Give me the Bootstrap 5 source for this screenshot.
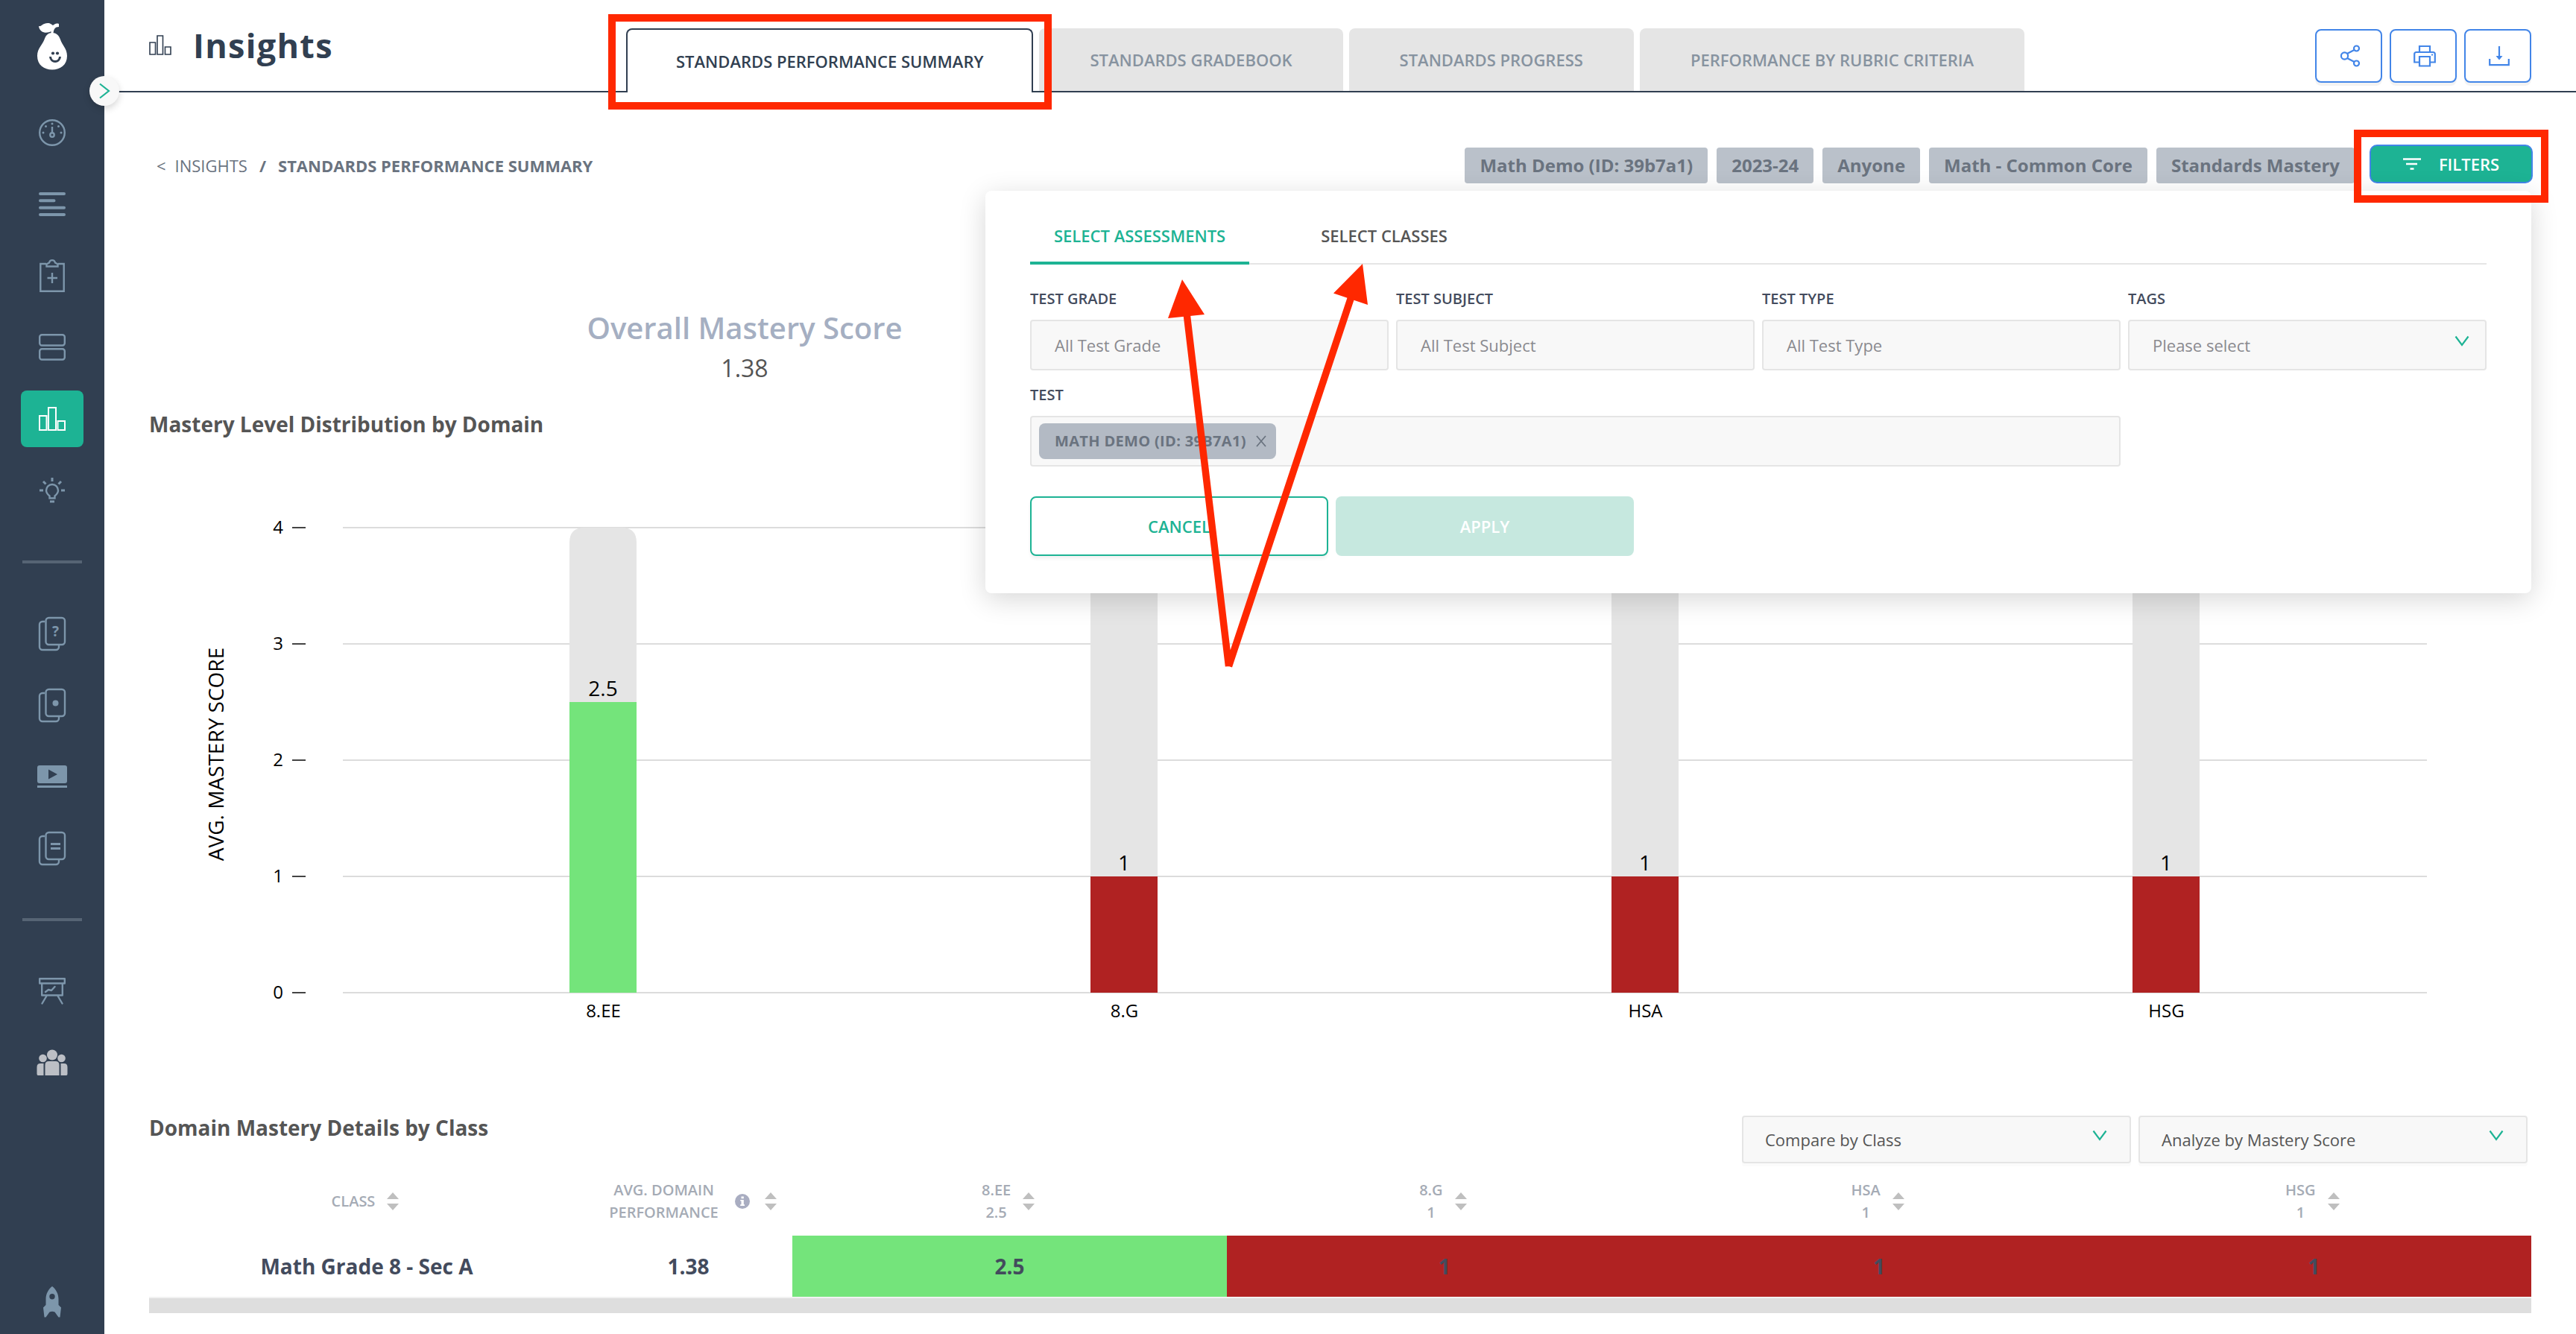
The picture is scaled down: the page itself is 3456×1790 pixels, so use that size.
<!DOCTYPE html>
<html lang="en">

<head>
  <meta charset="UTF-8">
  <meta name="viewport" content="width=device-width, initial-scale=1.0">
  <title>Insights - Standards Performance Summary</title>
  <link rel="stylesheet" href="https://cdn.jsdelivr.net/npm/bootstrap@5.3.0/dist/css/bootstrap.min.css">
  <style>
    :root {
      --navy: #313f51;
      --green: #1db394;
      --blue: #4285e8;
      --red: #ff2800;
      --icon: #7d96ab;
    }

    body {
      font-family: "Open Sans", "Noto Sans", sans-serif;
      font-size: 22px;
      color: #555;
      height: 1790px;
      overflow: hidden;
    }

    svg { display: block; }

    /* sidebar */
    .side-menu { width: 140px; height: 1790px; background: var(--navy); padding-top: 30px; }
    .side-menu svg { fill: none; stroke: var(--icon); stroke-width: 2.4; }
    .side-logo { height: 110px; }
    .side-item { width: 84px; height: 76px; border-radius: 8px; margin-bottom: 20px; }
    .side-item.active { background: var(--green); }
    .side-item.active svg { stroke: #fff; stroke-width: 2; }
    .side-line { width: 80px; height: 4px; background: #566474; margin: 36px 0 56px; }
    .side-toggle { left: 120px; top: 102px; width: 40px; height: 40px; background: #f8f8f8; box-shadow: 0 4px 10px rgba(0, 0, 0, .16); z-index: 5; }

    /* header */
    .top-bar { height: 124px; border-bottom: 2px solid var(--navy); padding: 0 60px; }
    .page-title { width: 640px; padding-top: 30px; }
    .page-title h1 { font-size: 45px; font-weight: 700; line-height: 62px; letter-spacing: 1.3px; color: var(--navy); margin: 0 0 0 29px; }
    .report-tabs { gap: 8px; padding-top: 38px; }
    .report-tab { height: 84px; padding: 0 68px; border-radius: 8px 8px 0 0; background: #e5e5e5; color: #8793a0; font-weight: 600; }
    .report-tab.active { height: 86px; margin-bottom: -2px; padding: 0 65px; border: 2px solid var(--navy); border-bottom: 0; background: #fff; color: var(--navy); }
    .action-btn { width: 90px; height: 72px; padding-left: 10px; border: 2px solid var(--blue); border-radius: 8px; background: #fff; box-shadow: 0 4px 0 #f3f3f3; }
    .action-btn svg { fill: none; stroke: var(--blue); stroke-width: 2.2; }

    /* content */
    .page-body { padding: 70px 60px 0; }
    .crumbs { height: 52px; padding: 4px 0 0 10px; color: #6a737f; font-weight: 500; }
    .filter-tag { height: 48px; padding: 0 20px; border-radius: 4px; background: #bac1ca; color: #6a737f; font-size: 24px; font-weight: 700; white-space: nowrap; }
    .filter-btn { width: 219px; height: 52px; margin-right: -2px; margin-left: 8px; border: 2px solid var(--blue); border-radius: 10px; background: var(--green); color: #fff; font-size: 22px; font-weight: 600; }
    .overall { margin-top: 164px; }
    .overall h2 { font-size: 40px; font-weight: 600; line-height: 60px; color: #a5afc2; margin: 0; }
    .overall div { font-size: 32px; line-height: 48px; }
    .section-title { font-size: 28px; font-weight: 700; line-height: 42px; color: #555; margin: 0; }
    .chart-title { padding-top: 30px; }
    .compare { margin-top: 57px; height: 69px; padding-right: 5px; }
    .compare .section-title { line-height: 33px; }
    .pick { width: 522px; height: 64px; padding: 0 30px 0 29px; background: #f8f8f8; border: 2px solid #e5e5e5; border-radius: 4px; box-shadow: 0 4px 0 #fbfbfb; }
    .chev { fill: none; stroke: var(--green); stroke-width: 2.2; margin-bottom: 11px; }

    /* details table */
    .details { width: 3196px; table-layout: fixed; border-collapse: collapse; text-align: center; }
    .details th { height: 92px; padding: 0 4px 0 0; font-size: 20px; line-height: 30px; font-weight: 600; color: #a5abb5; }
    .details td { height: 82px; padding: 0; font-size: 28px; font-weight: 700; color: #434b5d; }
    .info-dot { margin: 0 20px 0 22px; }
    .lvl-good { background: #74e47b; }
    .lvl-low { background: #b02222; }
    .scroll-track { height: 22px; background: #dedede; border-top: 2px solid #f2f2f2; }

    /* filter panel */
    .filter-panel { left: 1322px; top: 256px; width: 2074px; height: 540px; padding: 43px 60px 0; border-radius: 8px; background: #fff; box-shadow: 0 8px 36px rgba(0, 0, 0, .16); z-index: 3; }
    .panel-tabs { gap: 64px; border-bottom: 2px solid #e5e5e5; height: 56px; }
    .panel-tab { height: 56px; padding: 0 32px; line-height: 34px; font-weight: 600; }
    .panel-tab.active { color: var(--green); border-bottom: 4px solid var(--green); }
    .panel-row { gap: 10px; margin-top: 31px; }
    .test-row { width: 1463px; margin-top: 18px; }
    .field-name { font-size: 20px; line-height: 30px; font-weight: 600; color: #434b5d; margin-bottom: 13px; }
    .field-box { height: 68px; padding: 0 21px 0 31px; background: #f8f8f8; border: 2px solid #e5e5e5; border-radius: 4px; color: #8a8a8f; font-weight: 500; }
    .test-chip { height: 48px; padding: 0 13px 0 21px; margin-left: -21px; gap: 13px; border-radius: 8px; background: #b3bac4; color: #6a737f; font-size: 20px; font-weight: 700; letter-spacing: .33px; }
    .panel-actions { gap: 10px; margin-top: 40px; }
    .panel-btn { width: 400px; height: 80px; border-radius: 8px; font-size: 22px; font-weight: 600; }
    .btn-cancel { border: 2px solid var(--green); background: #fff; color: var(--green); box-shadow: 0 4px 4px #f3f3f3; }
    .btn-apply { border: 0; background: #c6e8df; color: #fff; }

    /* red callouts */
    .callout-box { border: 10px solid var(--red); z-index: 6; }
    .callout-tab { left: 816px; top: 19px; width: 595px; height: 128px; }
    .callout-filter { left: 3158px; top: 174px; width: 261px; height: 98px; }
    .callout-arrows { left: 1560px; top: 340px; z-index: 6; }
  </style>
</head>

<body class="position-relative d-flex bg-white">

  <svg width="0" height="0" class="position-absolute">
    <symbol id="sort" viewBox="0 0 16 24">
      <path d="M8 0L16 9H0zM8 24L0 15H16z" fill="#bfbfbf" stroke="none" />
    </symbol>
    <symbol id="chev" viewBox="0 0 20 16">
      <path d="M1.5 1.5L10 13L18.500 1.5" />
    </symbol>
    <symbol id="pages" viewBox="0 0 40 48">
      <path d="M10 8H7a4 4 0 0 0-4 4V42a4 4 0 0 0 4 4H25a4 4 0 0 0 4-4V40" />
      <rect x="11.500" y="3" width="25.500" height="36" rx="4" />
    </symbol>
  </svg>

  <nav class="side-menu d-flex flex-column align-items-center flex-shrink-0">
    <div class="side-logo">
      <svg width="44" height="66" viewBox="0 0 44 66">
        <g stroke="none" fill="#fff">
          <path d="M22 14C27 14 31 17 33 23C35 30 42 35 42 45C42 57 33 63.500 22 63.500S2 57 2 45C2 35 9 30 11.500 23C13.500 17 17 14 22 14Z" />
          <path d="M4 5C8 6 9 1 16 1C20 1 21 3 23 4C26 2 27 1 31 2V6C26 6 24 9 23.500 15H20.500V12C16 15 5 15 4 5Z" />
        </g>
        <circle cx="23" cy="41.500" r="2.100" fill="#313f51" stroke="none" />
        <circle cx="29" cy="41.500" r="2.100" fill="#313f51" stroke="none" />
        <path d="M19.500 46C20 54.500 32 54.500 32.500 46" stroke="#313f51" stroke-width="3" />
      </svg>
    </div>
    <div class="side-item d-flex align-items-center justify-content-center">
      <svg width="40" height="40" viewBox="0 0 40 40">
        <circle cx="20" cy="20" r="16.800" />
        <path d="M20 12V20" />
        <circle cx="20" cy="23" r="2.700" />
        <g fill="#7d96ab" stroke="none">
          <circle cx="20" cy="8" r="1.500" /><circle cx="11.500" cy="11.500" r="1.500" /><circle cx="28.500" cy="11.500" r="1.500" />
          <circle cx="8" cy="20" r="1.500" /><circle cx="32" cy="20" r="1.500" />
        </g>
      </svg>
    </div>
    <div class="side-item d-flex align-items-center justify-content-center">
      <svg width="36" height="32" viewBox="0 0 36 32">
        <path d="M2 2H34M2 11.300H20.500M2 20.700H34M2 30H34" stroke-width="4" stroke-linecap="round" />
      </svg>
    </div>
    <div class="side-item d-flex align-items-center justify-content-center">
      <svg width="36" height="46" viewBox="0 0 36 46">
        <path d="M10 7H2.300V43.700H33.700V7H26M18 19V33M11.500 26H25" />
        <path d="M10.500 10.500V7.500L14 5.500C15 1 21 1 22 5.500L25.500 7.500V10.500Z" />
      </svg>
    </div>
    <div class="side-item d-flex align-items-center justify-content-center">
      <svg width="36" height="36" viewBox="0 0 36 36">
        <rect x="1.200" y="1.200" width="33.600" height="14.300" rx="3" />
        <rect x="1.200" y="20.200" width="33.600" height="14.300" rx="3" />
      </svg>
    </div>
    <div class="side-item active d-flex align-items-center justify-content-center">
      <svg width="36" height="32" viewBox="0 0 36 32">
        <path d="M1 12H10.500V31H1zM13 1H23V31H13zM25.500 19H35V31H25.500z" />
      </svg>
    </div>
    <div class="side-item d-flex align-items-center justify-content-center">
      <svg width="34" height="34" viewBox="0 0 34 34">
        <path d="M13.500 27.500V24.500C11 22.500 9 20.500 9 17A8 8 0 0 1 25 17C25 20.500 23 22.500 20.500 24.500V27.500Z" />
        <path d="M17 0V5M0 17H5M29 17H34M5 5L8.500 8.500M29 5L25.500 8.500M14 32H20" stroke-width="3" />
      </svg>
    </div>
    <div class="side-line"></div>
    <div class="side-item d-flex align-items-center justify-content-center">
      <svg width="40" height="48" viewBox="0 0 40 48">
        <use href="#pages" />
        <text x="24.500" y="28" font-size="19" font-weight="700" text-anchor="middle" fill="#7d96ab" stroke="none">?</text>
      </svg>
    </div>
    <div class="side-item d-flex align-items-center justify-content-center">
      <svg width="40" height="48" viewBox="0 0 40 48">
        <use href="#pages" />
        <circle cx="24.500" cy="21.500" r="4" fill="#7d96ab" stroke="none" />
      </svg>
    </div>
    <div class="side-item d-flex align-items-center justify-content-center">
      <svg width="40" height="30" viewBox="0 0 40 30">
        <path d="M3 0H37Q40 0 40 3V21Q40 24 37 24H3Q0 24 0 21V3Q0 0 3 0ZM15 5.500V18.500L27 12ZM0 27H40V30H0Z" fill="#7d96ab" fill-rule="evenodd" stroke="none" />
      </svg>
    </div>
    <div class="side-item d-flex align-items-center justify-content-center">
      <svg width="40" height="48" viewBox="0 0 40 48">
        <use href="#pages" />
        <path d="M18 18.500H31M18 24.500H31" stroke-width="3" />
      </svg>
    </div>
    <div class="side-line"></div>
    <div class="side-item d-flex align-items-center justify-content-center">
      <svg width="36" height="36" viewBox="0 0 36 36">
        <path d="M1.200 1.200H34.800V7.500H1.200zM4.200 7.500V23.500H31.800V7.500M11 23.500L4.500 34.500M25 23.500L31.500 34.500M9 19L13 16L17 17L21.500 12" stroke-linecap="round" stroke-linejoin="round" />
      </svg>
    </div>
    <div class="side-item d-flex align-items-center justify-content-center">
      <svg width="42" height="36" viewBox="0 0 42 36">
        <g fill="#bcbfc5" stroke="none">
          <circle cx="21" cy="7.500" r="7" /><circle cx="8.500" cy="12" r="5.300" /><circle cx="33.500" cy="12" r="5.300" />
          <path d="M11.500 35V21Q11.500 16 16.500 16H25.500Q30.500 16 30.500 21V35zM2 35Q.5 35 .5 33V24Q.5 19 5 19H9.500V35zM32.500 35V19H37Q41.500 19 41.500 24V33Q41.500 35 40 35z" />
        </g>
      </svg>
    </div>
    <div class="mt-auto pb-3 mb-1">
      <svg width="24" height="44" viewBox="0 0 24 44">
        <path d="M12 0C17 4 20.500 10 20.500 17V25L24 28.500L22.500 41.500H20.500L15.500 34.500C13 33.500 11 33.500 8.500 34.500L3.500 41.500H1.500L0 28.500L3.500 25V17C3.500 10 7 4 12 0ZM12 10A3.700 3.700 0 1 0 12 17.400A3.700 3.700 0 1 0 12 10Z" fill="#7d96ab" fill-rule="evenodd" stroke="none" />
      </svg>
    </div>
  </nav>

  <div class="side-toggle position-absolute rounded-circle d-flex align-items-center justify-content-center">
    <svg width="16" height="22" viewBox="0 0 16 22">
      <path d="M2 1.500L14 11L2 20.500" fill="none" stroke="#1db394" stroke-width="2.200" />
    </svg>
  </div>

  <main class="flex-grow-1">
    <header class="top-bar d-flex">
      <div class="page-title d-flex align-items-start flex-shrink-0">
        <svg width="30" height="44" viewBox="0 0 30 44">
          <path d="M1 27H8.500V43H1zM11 18H18.500V43H11zM21.500 33H29V43H21.500z" fill="none" stroke="#313f51" stroke-width="1.600" />
        </svg>
        <h1>Insights</h1>
      </div>
      <div class="report-tabs d-flex">
        <div class="report-tab active d-flex align-items-center">STANDARDS PERFORMANCE SUMMARY</div>
        <div class="report-tab d-flex align-items-center">STANDARDS GRADEBOOK</div>
        <div class="report-tab d-flex align-items-center">STANDARDS PROGRESS</div>
        <div class="report-tab d-flex align-items-center">PERFORMANCE BY RUBRIC CRITERIA</div>
      </div>
      <div class="d-flex ms-auto align-items-center pt-4 mt-1 pb-0" style="gap: 10px">
        <button class="action-btn d-flex align-items-center justify-content-center">
          <svg width="28" height="30" viewBox="0 0 28 30">
            <circle cx="6.500" cy="15" r="4.600" /><circle cx="22.500" cy="5" r="3.500" /><circle cx="22.500" cy="25" r="3.500" />
            <path d="M10 12L19.500 7M10 18L19.500 23" />
          </svg>
        </button>
        <button class="action-btn d-flex align-items-center justify-content-center">
          <svg width="30" height="30" viewBox="0 0 30 30">
            <path d="M8 10V2H22V10M8 23.500H1.200V12.500Q1.200 10 4 10H26Q28.800 10 28.800 12.500V23.500H22M8 16H22V28.500H8zM24 13.500H26" />
          </svg>
        </button>
        <button class="action-btn d-flex align-items-center justify-content-center">
          <svg width="28" height="28" viewBox="0 0 28 28">
            <path d="M1.200 18V26.200H26.800V18M14 1V18" />
            <path d="M9.500 14H18.500L14 19.500z" fill="#4285e8" stroke="none" />
          </svg>
        </button>
      </div>
    </header>

    <div class="page-body">
      <div class="d-flex align-items-end">
        <div class="crumbs d-flex align-items-center me-auto"><span>&lt;</span><span class="ms-2 ps-1">INSIGHTS</span><b class="mx-3">/</b><b>STANDARDS PERFORMANCE SUMMARY</b></div>
        <div class="d-flex align-items-end" style="gap: 12px">
          <span class="filter-tag d-flex align-items-center">Math Demo (ID: 39b7a1)</span>
          <span class="filter-tag d-flex align-items-center">2023-24</span>
          <span class="filter-tag d-flex align-items-center">Anyone</span>
          <span class="filter-tag d-flex align-items-center">Math - Common Core</span>
          <span class="filter-tag d-flex align-items-center">Standards Mastery</span>
          <button class="filter-btn d-flex align-items-center justify-content-center gap-4">
            <svg width="24" height="16" viewBox="0 0 24 16">
              <path d="M0 1.500H24M4 8H19M9.500 14.500H14.500" stroke="#fff" stroke-width="2.600" />
            </svg>
            FILTERS
          </button>
        </div>
      </div>

      <div class="row g-0">
        <div class="col-6 text-center overall">
          <h2>Overall Mastery Score</h2>
          <div>1.38</div>
        </div>
      </div>

      <h3 class="section-title chart-title">Mastery Level Distribution by Domain</h3>

      <!-- average mastery per domain, 156px per score point -->
      <svg width="3196" height="850" viewBox="200 590 3196 850" fill="#000">
        <g stroke="#dcdcdc" stroke-width="2">
          <path d="M460 708H3256M460 864H3256M460 1020H3256M460 1176H3256M460 1332H3256" />
        </g>
        <path d="M392 708H410M392 864H410M392 1020H410M392 1176H410M392 1332H410" stroke="#444" stroke-width="2" />
        <g font-size="24" text-anchor="end">
          <text x="380" y="716">4</text>
          <text x="380" y="872">3</text>
          <text x="380" y="1028">2</text>
          <text x="380" y="1184">1</text>
          <text x="380" y="1340">0</text>
        </g>
        <text transform="translate(300 1012) rotate(-90)" font-size="28" text-anchor="middle">AVG. MASTERY SCORE</text>
        <g fill="#e5e5e5">
          <path d="M764 942V728Q764 708 784 708H834Q854 708 854 728V942z" />
          <path d="M1463 1176V728Q1463 708 1483 708H1533Q1553 708 1553 728V1176z" />
          <path d="M2162 1176V728Q2162 708 2182 708H2232Q2252 708 2252 728V1176z" />
          <path d="M2861 1176V728Q2861 708 2881 708H2931Q2951 708 2951 728V1176z" />
        </g>
        <rect x="764" y="942" width="90" height="390" fill="#74e47b" />
        <g fill="#b02222">
          <rect x="1463" y="1176" width="90" height="156" />
          <rect x="2162" y="1176" width="90" height="156" />
          <rect x="2861" y="1176" width="90" height="156" />
        </g>
        <g font-size="28" text-anchor="middle">
          <text x="809" y="934">2.5</text>
          <text x="1508" y="1168">1</text>
          <text x="2207" y="1168">1</text>
          <text x="2906" y="1168">1</text>
        </g>
        <g font-size="24" text-anchor="middle">
          <text x="809.500" y="1365">8.EE</text>
          <text x="1508.500" y="1365">8.G</text>
          <text x="2207.500" y="1365">HSA</text>
          <text x="2906.500" y="1365">HSG</text>
        </g>
      </svg>

      <div class="compare d-flex align-items-start">
        <h3 class="section-title me-auto">Domain Mastery Details by Class</h3>
        <div class="d-flex" style="gap: 10px">
          <div class="pick d-flex align-items-center justify-content-between">Compare by Class
            <svg class="chev" width="20" height="16"><use href="#chev" /></svg>
          </div>
          <div class="pick d-flex align-items-center justify-content-between">Analyze by Mastery Score
            <svg class="chev" width="20" height="16"><use href="#chev" /></svg>
          </div>
        </div>
      </div>

      <table class="details">
        <colgroup>
          <col style="width: 584px">
          <col style="width: 279px">
          <col><col><col><col>
        </colgroup>
        <thead>
          <tr>
            <th><div class="d-flex align-items-center justify-content-center gap-3">CLASS <svg width="16" height="24"><use href="#sort" /></svg></div></th>
            <th>
              <div class="d-flex align-items-center justify-content-center ps-3">
                <span>AVG. DOMAIN<br>PERFORMANCE</span>
                <svg class="info-dot" width="20" height="20" viewBox="0 0 20 20">
                  <circle cx="10" cy="10" r="10" fill="#a9adc1" />
                  <path d="M8.500 3.500H11.800V6.300H8.500zM7.200 8H11.800V14.300H13V16H7.200V14.300H8.500V9.600H7.200z" fill="#fff" />
                </svg>
                <svg width="16" height="24"><use href="#sort" /></svg>
              </div>
            </th>
            <th><div class="d-flex align-items-center justify-content-center gap-3"><span>8.EE<br>2.5</span> <svg width="16" height="24"><use href="#sort" /></svg></div></th>
            <th><div class="d-flex align-items-center justify-content-center gap-3"><span>8.G<br>1</span> <svg width="16" height="24"><use href="#sort" /></svg></div></th>
            <th><div class="d-flex align-items-center justify-content-center gap-3"><span>HSA<br>1</span> <svg width="16" height="24"><use href="#sort" /></svg></div></th>
            <th><div class="d-flex align-items-center justify-content-center gap-3"><span>HSG<br>1</span> <svg width="16" height="24"><use href="#sort" /></svg></div></th>
          </tr>
        </thead>
        <tbody>
          <tr>
            <td>Math Grade 8 - Sec A</td>
            <td>1.38</td>
            <td class="lvl-good">2.5</td>
            <td class="lvl-low">1</td>
            <td class="lvl-low">1</td>
            <td class="lvl-low">1</td>
          </tr>
        </tbody>
      </table>
      <div class="scroll-track"></div>
    </div>
  </main>

  <section class="filter-panel position-absolute">
    <div class="panel-tabs d-flex">
      <div class="panel-tab active">SELECT ASSESSMENTS</div>
      <div class="panel-tab">SELECT CLASSES</div>
    </div>
    <div class="panel-row d-flex">
      <div class="flex-fill w-25">
        <div class="field-name">TEST GRADE</div>
        <div class="field-box d-flex align-items-center">All Test Grade</div>
      </div>
      <div class="flex-fill w-25">
        <div class="field-name">TEST SUBJECT</div>
        <div class="field-box d-flex align-items-center">All Test Subject</div>
      </div>
      <div class="flex-fill w-25">
        <div class="field-name">TEST TYPE</div>
        <div class="field-box d-flex align-items-center">All Test Type</div>
      </div>
      <div class="flex-fill w-25">
        <div class="field-name">TAGS</div>
        <div class="field-box d-flex align-items-center justify-content-between">Please select
          <svg class="chev" width="20" height="16"><use href="#chev" /></svg>
        </div>
      </div>
    </div>
    <div class="test-row">
      <div class="field-name">TEST</div>
      <div class="field-box d-flex align-items-center">
        <div class="test-chip d-flex align-items-center">MATH DEMO (ID: 39B7A1)
          <svg width="14" height="16" viewBox="0 0 14 16"><path d="M1 1L13 15M13 1L1 15" stroke="#6a737f" stroke-width="1.800" /></svg>
        </div>
      </div>
    </div>
    <div class="panel-actions d-flex">
      <button class="panel-btn btn-cancel">CANCEL</button>
      <button class="panel-btn btn-apply">APPLY</button>
    </div>
  </section>

  <div class="callout-box callout-tab position-absolute"></div>
  <div class="callout-box callout-filter position-absolute"></div>
  <svg class="callout-arrows position-absolute" width="290" height="560" viewBox="1560 340 290 560">
    <path d="M1592 420L1648.500 894M1814 395L1648.500 894" fill="none" stroke="#ff2800" stroke-width="9.500" />
    <path d="M1586 375L1616 422L1567 427zM1828 354L1835 409L1789 393.500z" fill="#ff2800" />
  </svg>

  <script src="https://cdn.jsdelivr.net/npm/bootstrap@5.3.0/dist/js/bootstrap.bundle.min.js"></script>
</body>

</html>
